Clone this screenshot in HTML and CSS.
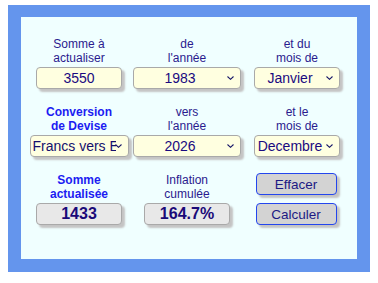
FILE: index.html
```html
<!DOCTYPE html>
<html lang="fr">

<head>
  <meta charset="utf-8">
  <title>Convertisseur franc - euro</title>
  <link rel="stylesheet" href="styles.css">
</head>

<body>
  <div class="frame">
    <div class="panel">
      <div class="cell">
        <p class="label">Somme à<br>actualiser</p>
        <input class="field" type="text" value="3550">
      </div>
      <div class="cell">
        <p class="label">de<br>l'année</p>
        <select class="field pick year"><option>1983</option></select>
      </div>
      <div class="cell">
        <p class="label">et du<br>mois de</p>
        <select class="field pick"><option>Janvier</option></select>
      </div>

      <div class="cell">
        <p class="label strong">Conversion<br>de Devise</p>
        <select class="field pick devise"><option>Francs vers Euros</option></select>
      </div>
      <div class="cell">
        <p class="label">vers<br>l'année</p>
        <select class="field pick year"><option>2026</option></select>
      </div>
      <div class="cell">
        <p class="label">et le<br>mois de</p>
        <select class="field pick"><option>Decembre</option></select>
      </div>

      <div class="cell">
        <p class="label strong">Somme<br>actualisée</p>
        <div class="result">1433</div>
      </div>
      <div class="cell">
        <p class="label">Inflation<br>cumulée</p>
        <div class="result">164.7%</div>
      </div>
      <div class="cell buttons">
        <button class="btn">Effacer</button>
        <button class="btn">Calculer</button>
      </div>
    </div>
  </div>
</body>

</html>
```

FILE: styles.css
```css
* {
  box-sizing: border-box;
}

body {
  margin: 5px 8px;
  font-family: "Liberation Sans", Arial, sans-serif;
}

.frame {
  width: 362px;
  height: 267px;
  border: 13px solid #6495ed;
  border-top-width: 12px;
  box-shadow: 4px 4px 1px #bdbdbd;
}

.panel {
  height: 100%;
  background: #f0ffff;
  padding-top: 20px;
  display: grid;
  grid-template-columns: 116px 100px 120px;
  row-gap: 16px;
  align-content: start;
}

.cell {
  display: flex;
  flex-direction: column;
  align-items: center;
  gap: 2px;
}

.label {
  margin: 0;
  font-size: 12px;
  line-height: 14px;
  text-align: center;
  color: #2a1a8e;
}

.label.strong {
  font-weight: bold;
  color: #1c1cf2;
}

.field {
  width: 86px;
  height: 22px;
  margin: 0;
  padding: 0;
  border: 1px solid #a9a9a9;
  border-radius: 4px;
  background-color: #ffffe0;
  box-shadow: 3px 3px 2px #c4c4c4;
  font-family: inherit;
  font-size: 14px;
  color: #1a0a80;
  text-align: center;
  outline: none;
}

.pick {
  appearance: none;
  -webkit-appearance: none;
  padding-right: 14px;
  text-align-last: center;
  background-image: url("data:image/svg+xml,%3Csvg xmlns='http://www.w3.org/2000/svg' width='7' height='4'%3E%3Cpath d='M0.5 0.5 L3.5 3.3 L6.5 0.5' fill='none' stroke='%231a1a6a' stroke-width='1.1'/%3E%3C/svg%3E");
  background-repeat: no-repeat;
  background-position: right 6px center;
}

.year {
  width: 108px;
}

.devise {
  width: 99px;
  padding-left: 2px;
  padding-right: 12px;
  text-align-last: left;
  color: #14106e;
}

.result {
  width: 86px;
  height: 22px;
  border: 1px solid #a9a9a9;
  border-radius: 4px;
  background: #e8e8e8;
  box-shadow: 3px 3px 2px #c4c4c4;
  font-size: 16px;
  font-weight: bold;
  line-height: 20px;
  text-align: center;
  color: #1a0a78;
}

.buttons {
  gap: 8px;
  padding-right: 2px;
}

.btn {
  width: 81px;
  height: 22px;
  padding: 0;
  border: 1px solid #2346ee;
  border-radius: 4px;
  background: #d3d3d3;
  box-shadow: 3px 3px 2px #c4c4c4;
  font-family: inherit;
  font-size: 13.5px;
  color: #1c1a84;
}
```
